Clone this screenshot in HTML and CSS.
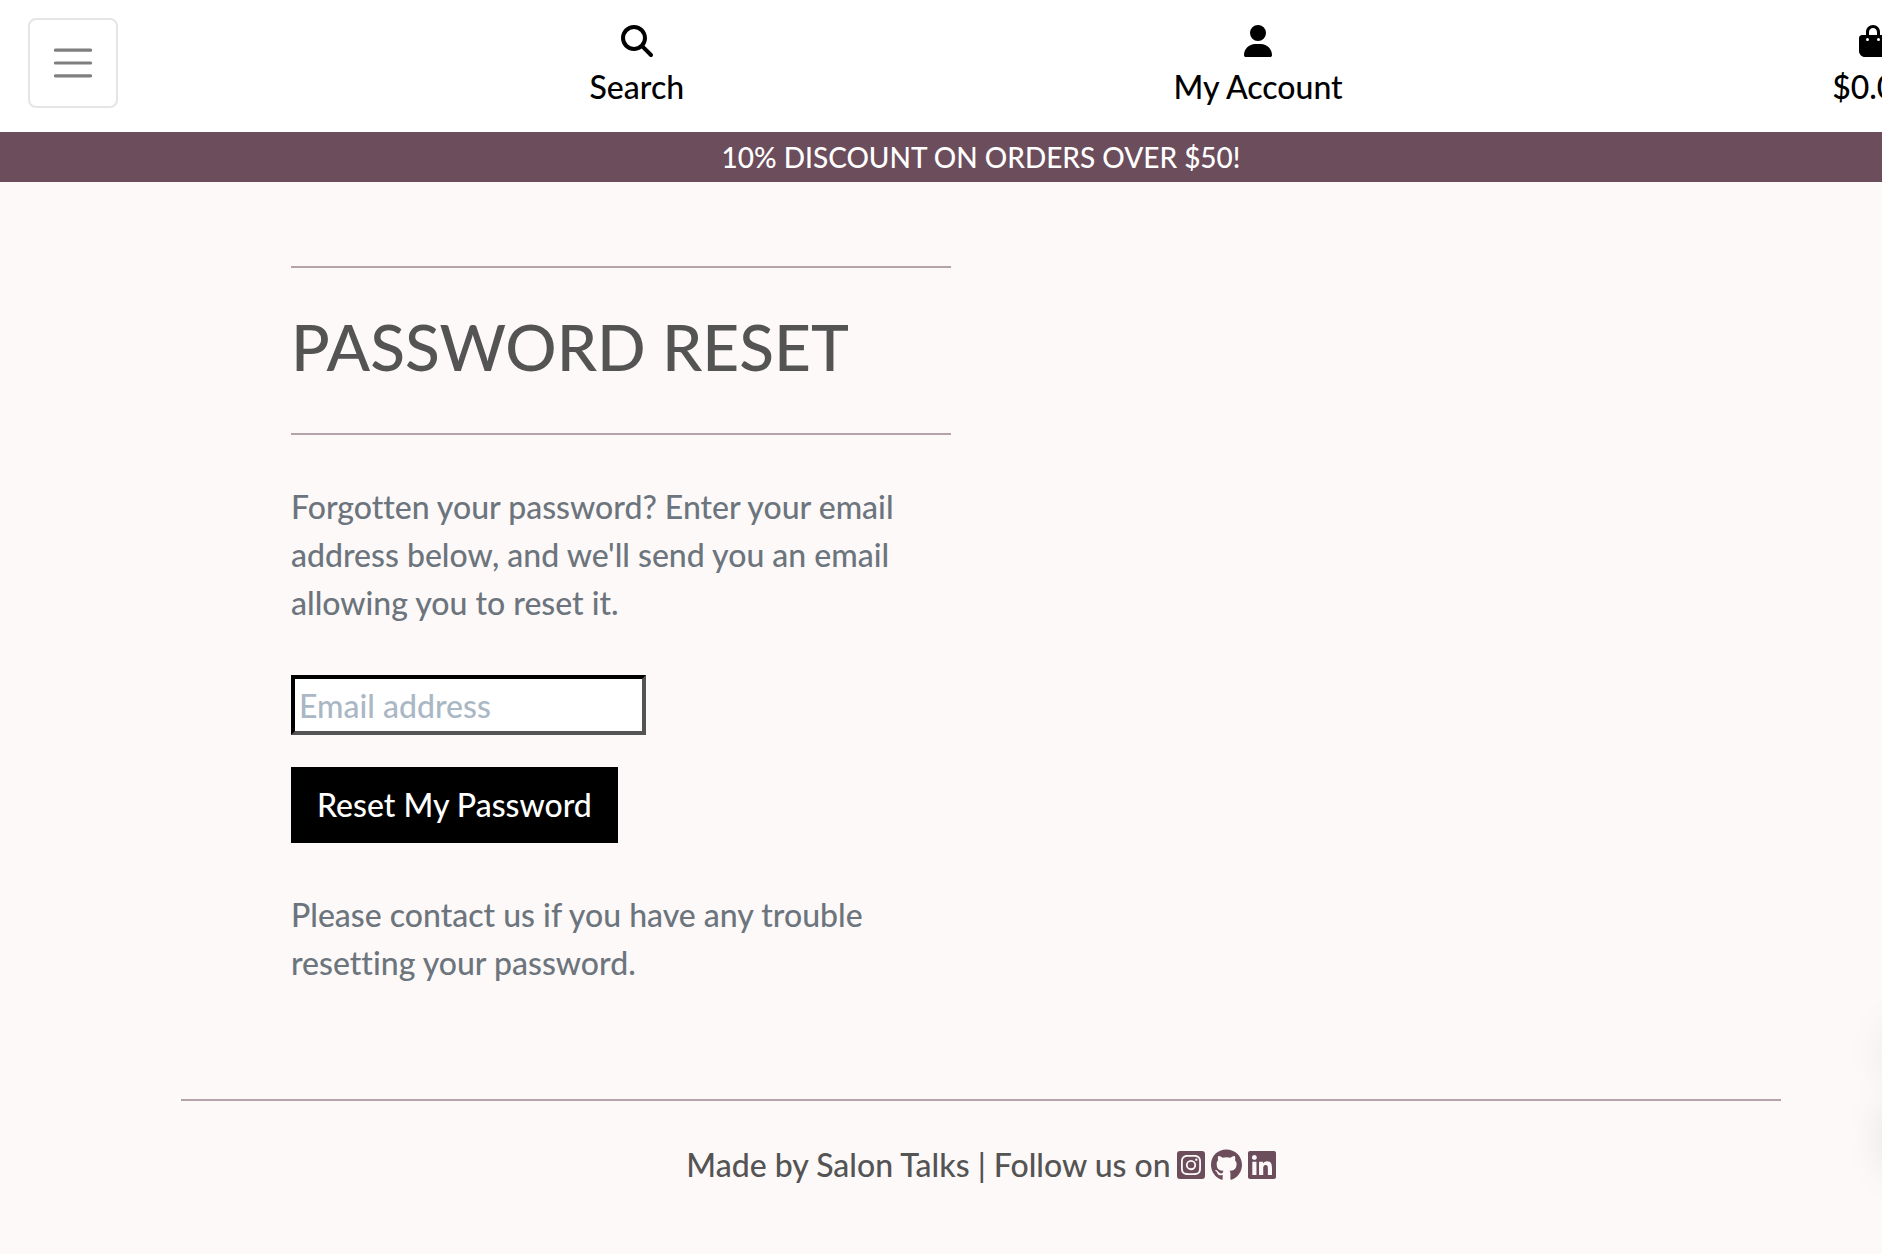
FILE: index.html
```html
<!DOCTYPE html>
<html lang="en">
<head>
<meta charset="utf-8">
<meta name="viewport" content="width=device-width, initial-scale=1">
<title>Salon Talks</title>
<link rel="stylesheet" href="styles.css">
</head>
<body>
<div class="page">
  <header class="topbar">
    <button class="menu-toggle" type="button" aria-label="Toggle navigation">
      <svg class="menu-icon" viewBox="0 0 30 30" aria-hidden="true"><path stroke-linecap="round" stroke-miterlimit="10" d="M4 7h22M4 15h22M4 23h22"/></svg>
    </button>
    <nav class="nav">
      <a class="nav-link" href="#search">
        <svg class="icon" viewBox="0 0 512 512" aria-hidden="true"><path d="M416 208c0 45.900-14.900 88.300-40 122.700L502.600 457.400c12.500 12.500 12.500 32.800 0 45.300s-32.800 12.500-45.300 0L330.700 376c-34.400 25.200-76.800 40-122.700 40C93.100 416 0 322.900 0 208S93.100 0 208 0S416 93.100 416 208zM208 352a144 144 0 1 0 0-288 144 144 0 1 0 0 288z"/></svg>
        <span>Search</span>
      </a>
      <a class="nav-link" href="#account">
        <svg class="icon" viewBox="0 0 448 512" aria-hidden="true"><path d="M224 256A128 128 0 1 0 224 0a128 128 0 1 0 0 256zm-45.700 48C79.800 304 0 383.800 0 482.300C0 498.700 13.300 512 29.700 512H418.300c16.400 0 29.700-13.300 29.700-29.700C448 383.800 368.200 304 269.700 304H178.300z"/></svg>
        <span>My Account</span>
      </a>
      <a class="nav-link" href="#bag">
        <svg class="icon" viewBox="0 0 448 512" aria-hidden="true"><path d="M160 112c0-35.300 28.700-64 64-64s64 28.700 64 64v48H160V112zm-48 48H48c-26.500 0-48 21.500-48 48V416c0 53 43 96 96 96H352c53 0 96-43 96-96V208c0-26.500-21.500-48-48-48H336V112C336 50.100 285.900 0 224 0S112 50.100 112 112v48zm24 48a24 24 0 1 1 0 48 24 24 0 1 1 0-48zm152 24a24 24 0 1 1 48 0 24 24 0 1 1 -48 0z"/></svg>
        <span>$0.00</span>
      </a>
    </nav>
  </header>

  <div class="banner">10% DISCOUNT ON ORDERS OVER $50!</div>

  <main class="container">
    <section class="column">
      <hr class="rule">
      <h1 class="title">PASSWORD RESET</h1>
      <hr class="rule">
      <p class="text">Forgotten your password? Enter your email address below, and we'll send you an email allowing you to reset it.</p>
      <form class="form">
        <input class="field" type="email" name="email" placeholder="Email address" aria-label="Email address">
        <button class="submit" type="submit">Reset My Password</button>
      </form>
      <p class="text">Please contact us if you have any trouble resetting your password.</p>
    </section>
  </main>

  <footer class="footer">
    <hr class="rule">
    <div class="credits">
      <span>Made by Salon Talks | Follow us on</span>
      <a class="social" href="#instagram" aria-label="Instagram"><svg class="icon" viewBox="0 0 448 512" aria-hidden="true"><path d="M224 202.660A53.340 53.340 0 1 0 277.360 256 53.380 53.380 0 0 0 224 202.660zm124.710-41a54 54 0 0 0-30.410-30.410c-21-8.290-71-6.430-94.300-6.430s-73.250-1.930-94.310 6.430a54 54 0 0 0-30.410 30.410c-8.280 21-6.430 71.050-6.430 94.330S91 329.260 99.320 350.330a54 54 0 0 0 30.410 30.410c21 8.290 71 6.430 94.310 6.430s73.240 1.930 94.300-6.430a54 54 0 0 0 30.410-30.410c8.350-21 6.430-71.050 6.430-94.330S357.100 182.740 348.750 161.670zM224 338a82 82 0 1 1 82-82A81.900 81.900 0 0 1 224 338zm85.380-148.300a19.140 19.140 0 1 1 19.130-19.140A19.100 19.100 0 0 1 309.420 189.740zM400 32H48A48 48 0 0 0 0 80V432a48 48 0 0 0 48 48H400a48 48 0 0 0 48-48V80A48 48 0 0 0 400 32zM382.880 322c-1.290 25.630-7.140 48.340-25.850 67s-41.400 24.630-67 25.850c-26.410 1.490-105.590 1.490-132 0-25.630-1.290-48.260-7.150-67-25.850s-24.630-41.420-25.850-67c-1.490-26.420-1.490-105.610 0-132 1.290-25.630 7.070-48.340 25.850-67s41.470-24.560 67-25.780c26.410-1.490 105.590-1.490 132 0 25.630 1.290 48.330 7.150 67 25.850s24.630 41.420 25.850 67.050C384.370 216.440 384.370 295.560 382.880 322z"/></svg></a>
      <a class="social" href="#github" aria-label="GitHub"><svg class="icon" viewBox="0 0 496 512" aria-hidden="true"><path d="M165.900 397.400c0 2-2.300 3.600-5.200 3.600-3.300.3-5.600-1.300-5.600-3.600 0-2 2.300-3.600 5.200-3.600 3-.3 5.600 1.300 5.600 3.600z"/><path d="M244.800 8C106.100 8 0 113.300 0 252c0 110.900 69.800 205.800 169.500 239.200 12.800 2.300 17.300-5.600 17.300-12.100 0-6.200-.3-40.400-.3-61.400 0 0-70 15-84.700-29.800 0 0-11.400-29.100-27.800-36.600 0 0-22.900-15.700 1.600-15.400 0 0 24.900 2 38.600 25.800 21.900 38.600 58.600 27.500 72.900 20.900 2.300-16 8.800-27.100 16-33.700-55.900-6.200-112.300-14.300-112.300-110.500 0-27.500 7.600-41.300 23.600-58.900-2.600-6.500-11.100-33.300 2.600-67.900 20.900-6.500 69 27 69 27 20-5.600 41.500-8.500 62.800-8.500s42.800 2.900 62.800 8.500c0 0 48.100-33.600 69-27 13.700 34.700 5.200 61.400 2.600 67.900 16 17.700 25.800 31.500 25.800 58.900 0 96.500-58.900 104.200-114.800 110.500 9.200 7.900 17 22.900 17 46.400 0 33.700-.3 75.400-.3 83.600 0 6.500 4.600 14.400 17.300 12.100C428.200 457.800 496 362.900 496 252 496 113.300 383.500 8 244.800 8z"/></svg></a>
      <a class="social" href="#linkedin" aria-label="LinkedIn"><svg class="icon" viewBox="0 0 448 512" aria-hidden="true"><path d="M416 32H31.900C14.300 32 0 46.500 0 64.300v383.400C0 465.500 14.300 480 31.900 480H416c17.600 0 32-14.500 32-32.300V64.300c0-17.800-14.400-32.300-32-32.300zM135.400 416H69V202.200h66.500V416zm-33.200-243c-21.300 0-38.500-17.300-38.500-38.500S80.900 96 102.200 96c21.200 0 38.500 17.300 38.500 38.500 0 21.300-17.200 38.500-38.500 38.500zm282.100 243h-66.400V312c0-24.800-.5-56.700-34.500-56.700-34.600 0-39.900 27-39.900 54.900V416h-66.400V202.200h63.700v29.200h.9c8.900-16.800 30.600-34.500 62.200-34.500 66.500 0 79.900 43.900 79.900 119.100z"/></svg></a>
    </div>
  </footer>
</div>
<div class="floating-button"></div>
</body>
</html>
```

FILE: styles.css
```css
* {
  box-sizing: border-box;
}

html {
  overflow-x: hidden;
  background: #fdf9f8;
}

body {
  margin: 0;
  overflow-x: hidden;
  font-family: Lato, "Liberation Sans", sans-serif;
  font-size: 32px;
  line-height: 48px;
  font-weight: 500;
  font-variant-ligatures: none;
  color: #545454;
}

/* The navigation runs wider than the window */
.page {
  width: calc(100% + 80px);
}

.topbar {
  display: flex;
  align-items: flex-start;
  padding: 18px 48px 21px 28px;
  background: #fff;
}

.menu-toggle {
  display: flex;
  align-items: center;
  justify-content: center;
  width: 90px;
  height: 90px;
  padding: 0;
  border: 2px solid #e5e5e5;
  border-radius: 8px;
  background: none;
}

.menu-icon {
  width: 48px;
  height: 48px;
  fill: none;
  stroke: #7f7f7f;
  stroke-width: 2;
}

.nav {
  display: flex;
  flex: 1;
  justify-content: space-between;
  padding-left: 25%;
}

.nav-link {
  display: flex;
  flex-direction: column;
  align-items: center;
  gap: 6px;
  padding-top: 7px;
  color: #000;
  text-decoration: none;
}

.icon {
  display: block;
  height: 32px;
  fill: currentColor;
}

.banner {
  padding: 1px 0;
  background: #6b4d5c;
  color: #fff;
  font-size: 28px;
  text-align: center;
}

.container {
  width: 1440px;
  max-width: 100%;
  margin: 0 auto;
  padding-top: 84px;
}

.column {
  width: 50%;
  padding: 0 30px;
}

.rule {
  height: 2px;
  margin: 0;
  border: 0;
  background: #b4a3aa;
}

.title {
  margin: 40px 0 48px;
  font-size: 64px;
  line-height: 77px;
  font-weight: 500;
}

.text {
  margin: 48px 0;
  color: #6c757d;
}

.form {
  display: flex;
  flex-direction: column;
  align-items: flex-start;
  gap: 32px;
}

.field {
  width: 355px;
  height: 60px;
  padding: 2px 4px;
  border: 4px solid;
  border-color: #000 #545454 #545454 #000;
  border-radius: 0;
  background: #fff;
  color: #545454;
  font: inherit;
}

.field::placeholder {
  color: #aab7c4;
  opacity: 1;
}

.submit {
  height: 76px;
  padding: 0 26px;
  border: 0;
  border-radius: 0;
  background: #000;
  color: #fff;
  font: inherit;
}

.footer {
  width: 1600px;
  max-width: 100%;
  margin: 0 auto;
  padding: 64px 0;
}

.credits {
  display: flex;
  justify-content: center;
  align-items: center;
  gap: 6px;
  padding-top: 40px;
}

.social {
  color: #6b4d5c;
}

/* Chat launcher sits past the right edge, only its shadow shows */
.floating-button {
  position: fixed;
  right: -68px;
  bottom: 128px;
  width: 60px;
  height: 60px;
  border-radius: 50%;
  box-shadow: 0 -41px 48px rgba(0, 0, 0, 0.12), 0 41px 48px rgba(0, 0, 0, 0.18);
}
```
